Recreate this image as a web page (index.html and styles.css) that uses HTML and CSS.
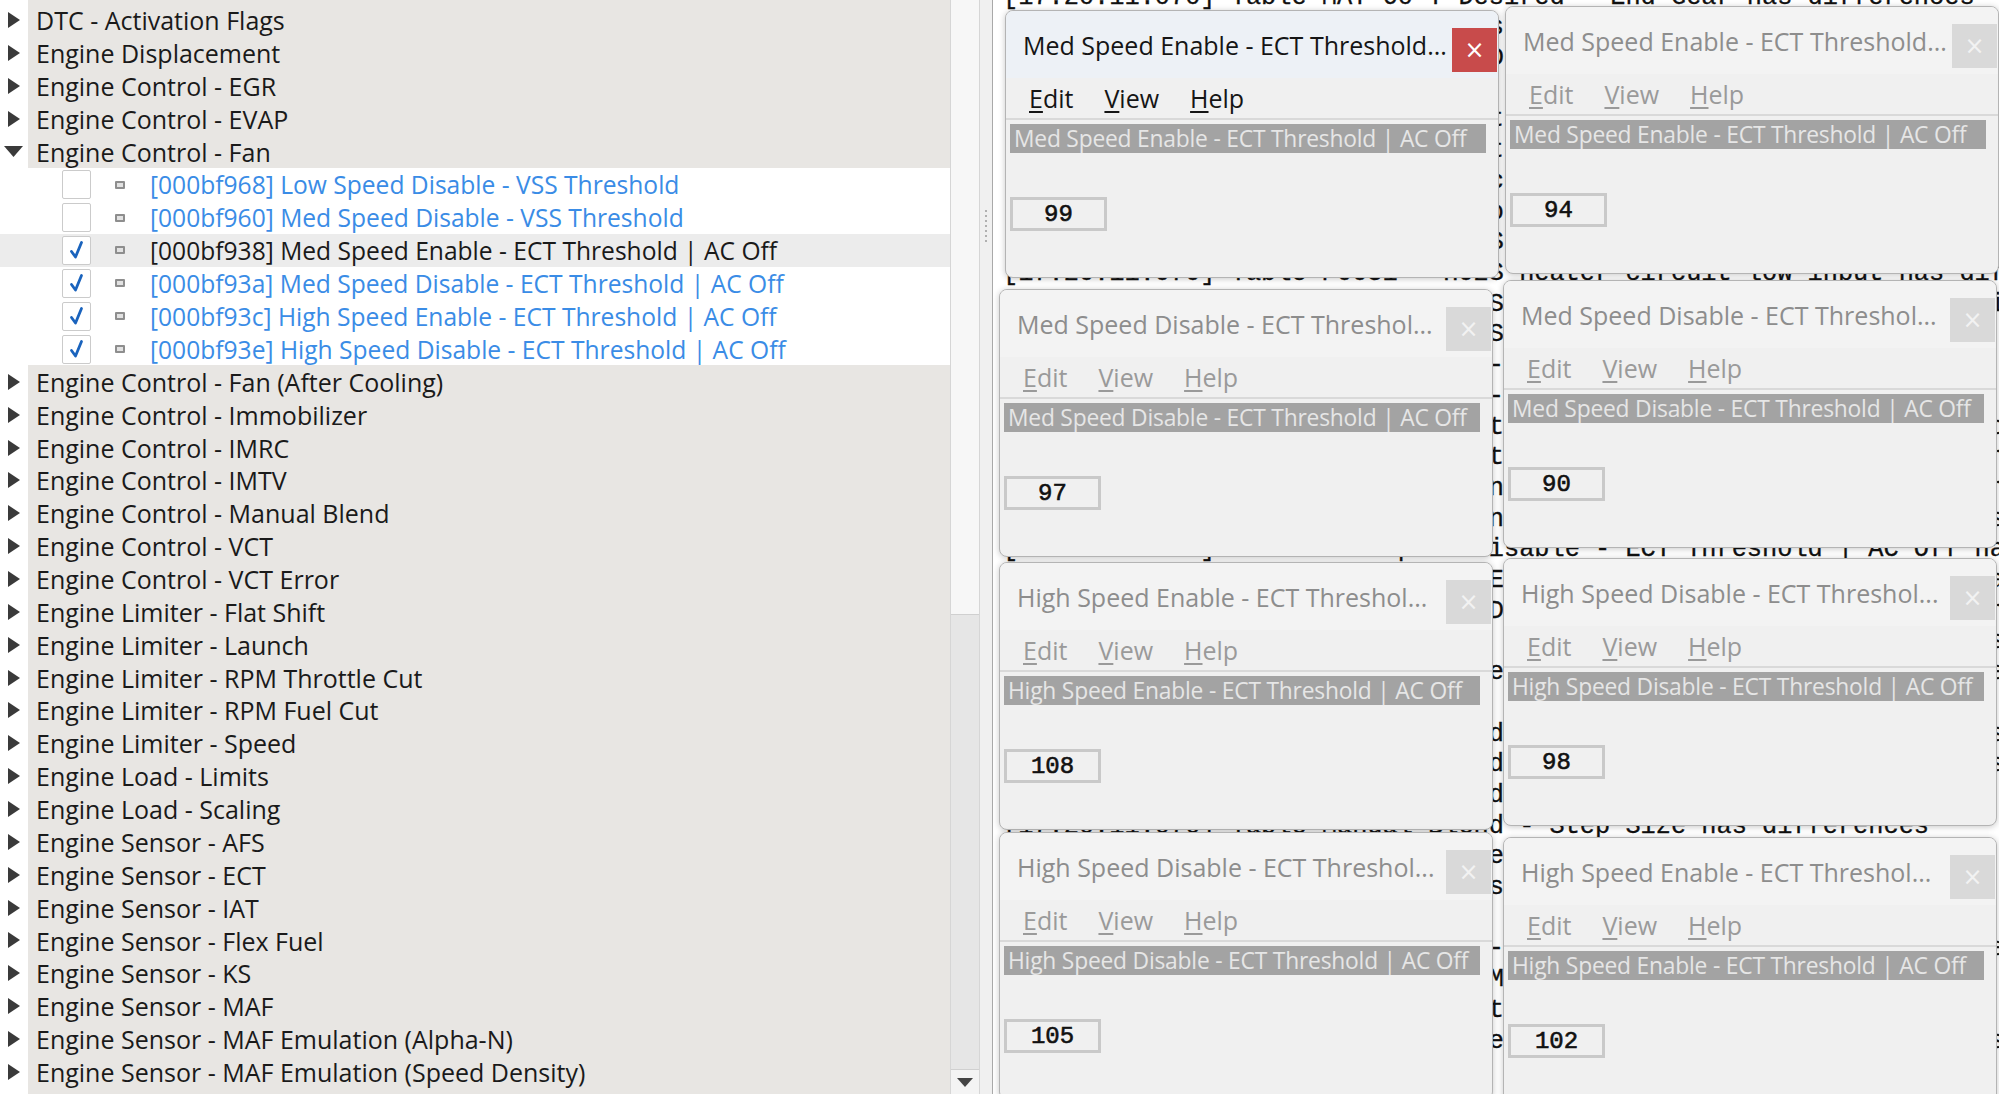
FILE: index.html
```html
<!DOCTYPE html>
<html>
<head>
<meta charset="utf-8">
<link rel="stylesheet" href="styles.css">
</head>
<body>
<div class="app">
  <div class="tree">
    <div class="row top"><span class="exp"><svg width="14" height="16" viewBox="0 0 14 16"><path d="M1 0 L13 8 L1 16 Z"/></svg></span><span class="txt">DTC - Activation Flags</span></div>
    <div class="row top"><span class="exp"><svg width="14" height="16" viewBox="0 0 14 16"><path d="M1 0 L13 8 L1 16 Z"/></svg></span><span class="txt">Engine Displacement</span></div>
    <div class="row top"><span class="exp"><svg width="14" height="16" viewBox="0 0 14 16"><path d="M1 0 L13 8 L1 16 Z"/></svg></span><span class="txt">Engine Control - EGR</span></div>
    <div class="row top"><span class="exp"><svg width="14" height="16" viewBox="0 0 14 16"><path d="M1 0 L13 8 L1 16 Z"/></svg></span><span class="txt">Engine Control - EVAP</span></div>
    <div class="row top"><span class="exp open"><svg width="19" height="11" viewBox="0 0 19 11"><path d="M0 0 L19 0 L9.5 11 Z"/></svg></span><span class="txt">Engine Control - Fan</span></div>
    <div class="row child"><span class="cb"></span><span class="bullet"></span><span class="ctxt">[000bf968] Low Speed Disable - VSS Threshold</span></div>
    <div class="row child"><span class="cb"></span><span class="bullet"></span><span class="ctxt">[000bf960] Med Speed Disable - VSS Threshold</span></div>
    <div class="row child sel"><span class="cb"><svg width="26" height="26" viewBox="0 0 26 26"><path d="M7.5 14.5 L11.5 20 L17.5 5.5"/></svg></span><span class="bullet"></span><span class="ctxt">[000bf938] Med Speed Enable - ECT Threshold | AC Off</span></div>
    <div class="row child"><span class="cb"><svg width="26" height="26" viewBox="0 0 26 26"><path d="M7.5 14.5 L11.5 20 L17.5 5.5"/></svg></span><span class="bullet"></span><span class="ctxt">[000bf93a] Med Speed Disable - ECT Threshold | AC Off</span></div>
    <div class="row child"><span class="cb"><svg width="26" height="26" viewBox="0 0 26 26"><path d="M7.5 14.5 L11.5 20 L17.5 5.5"/></svg></span><span class="bullet"></span><span class="ctxt">[000bf93c] High Speed Enable - ECT Threshold | AC Off</span></div>
    <div class="row child"><span class="cb"><svg width="26" height="26" viewBox="0 0 26 26"><path d="M7.5 14.5 L11.5 20 L17.5 5.5"/></svg></span><span class="bullet"></span><span class="ctxt">[000bf93e] High Speed Disable - ECT Threshold | AC Off</span></div>
    <div class="row top"><span class="exp"><svg width="14" height="16" viewBox="0 0 14 16"><path d="M1 0 L13 8 L1 16 Z"/></svg></span><span class="txt">Engine Control - Fan (After Cooling)</span></div>
    <div class="row top"><span class="exp"><svg width="14" height="16" viewBox="0 0 14 16"><path d="M1 0 L13 8 L1 16 Z"/></svg></span><span class="txt">Engine Control - Immobilizer</span></div>
    <div class="row top"><span class="exp"><svg width="14" height="16" viewBox="0 0 14 16"><path d="M1 0 L13 8 L1 16 Z"/></svg></span><span class="txt">Engine Control - IMRC</span></div>
    <div class="row top"><span class="exp"><svg width="14" height="16" viewBox="0 0 14 16"><path d="M1 0 L13 8 L1 16 Z"/></svg></span><span class="txt">Engine Control - IMTV</span></div>
    <div class="row top"><span class="exp"><svg width="14" height="16" viewBox="0 0 14 16"><path d="M1 0 L13 8 L1 16 Z"/></svg></span><span class="txt">Engine Control - Manual Blend</span></div>
    <div class="row top"><span class="exp"><svg width="14" height="16" viewBox="0 0 14 16"><path d="M1 0 L13 8 L1 16 Z"/></svg></span><span class="txt">Engine Control - VCT</span></div>
    <div class="row top"><span class="exp"><svg width="14" height="16" viewBox="0 0 14 16"><path d="M1 0 L13 8 L1 16 Z"/></svg></span><span class="txt">Engine Control - VCT Error</span></div>
    <div class="row top"><span class="exp"><svg width="14" height="16" viewBox="0 0 14 16"><path d="M1 0 L13 8 L1 16 Z"/></svg></span><span class="txt">Engine Limiter - Flat Shift</span></div>
    <div class="row top"><span class="exp"><svg width="14" height="16" viewBox="0 0 14 16"><path d="M1 0 L13 8 L1 16 Z"/></svg></span><span class="txt">Engine Limiter - Launch</span></div>
    <div class="row top"><span class="exp"><svg width="14" height="16" viewBox="0 0 14 16"><path d="M1 0 L13 8 L1 16 Z"/></svg></span><span class="txt">Engine Limiter - RPM Throttle Cut</span></div>
    <div class="row top"><span class="exp"><svg width="14" height="16" viewBox="0 0 14 16"><path d="M1 0 L13 8 L1 16 Z"/></svg></span><span class="txt">Engine Limiter - RPM Fuel Cut</span></div>
    <div class="row top"><span class="exp"><svg width="14" height="16" viewBox="0 0 14 16"><path d="M1 0 L13 8 L1 16 Z"/></svg></span><span class="txt">Engine Limiter - Speed</span></div>
    <div class="row top"><span class="exp"><svg width="14" height="16" viewBox="0 0 14 16"><path d="M1 0 L13 8 L1 16 Z"/></svg></span><span class="txt">Engine Load - Limits</span></div>
    <div class="row top"><span class="exp"><svg width="14" height="16" viewBox="0 0 14 16"><path d="M1 0 L13 8 L1 16 Z"/></svg></span><span class="txt">Engine Load - Scaling</span></div>
    <div class="row top"><span class="exp"><svg width="14" height="16" viewBox="0 0 14 16"><path d="M1 0 L13 8 L1 16 Z"/></svg></span><span class="txt">Engine Sensor - AFS</span></div>
    <div class="row top"><span class="exp"><svg width="14" height="16" viewBox="0 0 14 16"><path d="M1 0 L13 8 L1 16 Z"/></svg></span><span class="txt">Engine Sensor - ECT</span></div>
    <div class="row top"><span class="exp"><svg width="14" height="16" viewBox="0 0 14 16"><path d="M1 0 L13 8 L1 16 Z"/></svg></span><span class="txt">Engine Sensor - IAT</span></div>
    <div class="row top"><span class="exp"><svg width="14" height="16" viewBox="0 0 14 16"><path d="M1 0 L13 8 L1 16 Z"/></svg></span><span class="txt">Engine Sensor - Flex Fuel</span></div>
    <div class="row top"><span class="exp"><svg width="14" height="16" viewBox="0 0 14 16"><path d="M1 0 L13 8 L1 16 Z"/></svg></span><span class="txt">Engine Sensor - KS</span></div>
    <div class="row top"><span class="exp"><svg width="14" height="16" viewBox="0 0 14 16"><path d="M1 0 L13 8 L1 16 Z"/></svg></span><span class="txt">Engine Sensor - MAF</span></div>
    <div class="row top"><span class="exp"><svg width="14" height="16" viewBox="0 0 14 16"><path d="M1 0 L13 8 L1 16 Z"/></svg></span><span class="txt">Engine Sensor - MAF Emulation (Alpha-N)</span></div>
    <div class="row top"><span class="exp"><svg width="14" height="16" viewBox="0 0 14 16"><path d="M1 0 L13 8 L1 16 Z"/></svg></span><span class="txt">Engine Sensor - MAF Emulation (Speed Density)</span></div>
  </div>
  <div class="vscroll">
    <div class="thumb"></div>
    <div class="track"></div>
    <div class="down"><svg width="16" height="9" viewBox="0 0 16 9"><path d="M0 0 L16 0 L8 9 Z"/></svg></div>
  </div>
  <div class="splitter"><div class="grip"></div></div>
  <div class="logpane">
<pre class="log">[17:20:11.070] Table MAT 60 T Desired - End Gear has differences
[17:20:11.070] Table MAT 60 T Desired - Start Gear has differences
[17:20:11.070] Table Cold Start Delay - Engine Run Time has differences
[17:20:11.070] Table Boost Limit - Gear Scaler Offset has differences
[17:20:11.070] Table Boost Target - Desired Load has differences
[17:20:11.070] Table Boost Target - Wastegate Base has differences
[17:20:11.070] Table Spark Advance - Knock Retard has differences
[17:20:11.070] Table Injector Slope - Flow Rate has differences
[17:20:11.070] Table P0030 - HO2S Heater control circuit has differences
[17:20:11.070] Table P0031 - HO2S heater circuit low input has differences
[17:20:11.070] Table P0032 - HO2S heater circuit high input has differences
[17:20:11.070] Table P0036 - HO2S Bank 1 Sensor 2 has differences
[17:20:11.070] Table Idle Speed - Base RPM Target has differences
[17:20:11.070] Table Idle Speed - Neutral Offset has differences
[17:20:11.070] Table Throttle Cut - Enable Threshold has differences
[17:20:11.070] Table Throttle Cut - Hold Time Seconds has differences
[17:20:11.070] Table Low Speed Enable - ECT Threshold has differences
[17:20:11.070] Table Med Speed Enable - ECT Threshold | AC Off has differences
[17:20:11.070] Table Med Speed Disable - ECT Threshold | AC Off has differences
[17:20:11.070] Table High Speed Enable - ECT Threshold | AC Off has differences
[17:20:11.070] Table High Speed Disable - ECT Threshold | AC Off has differences
[17:20:11.070] Table Immobilizer - Key Count Limit has differences
[17:20:11.070] Table IMRC - Runner Position Desired has differences
[17:20:11.070] Table IMTV - Open Threshold RPM has differences
[17:20:11.070] Table Manual Blend - Load Threshold has differences
[17:20:11.070] Table Manual Blend - Gear Threshold has differences
[17:20:11.070] Table Manual Blend - Time Constant has differences
[17:20:11.070] Table Manual Blend - Step Size has differences
[17:20:11.070] Table VCT - Intake Cam Desired has differences
[17:20:11.070] Table VCT - Exhaust Cam Desired has differences
[17:20:11.070] Table VCT Error - Intake Limit Max has differences
[17:20:11.070] Table Flat Shift - Cut Time Duration has differences
[17:20:11.070] Table Launch - RPM Target Desired has differences
[17:20:11.070] Table RPM Fuel Cut - Limit Maximum has differences
[17:20:11.070] Table Speed Limiter - Maximum Speed has differences
[17:20:11.070] Table Load Limits - Maximum Load has differences
[17:20:11.070] Table Load Scaling - Multiplier has differences</pre>

    <div class="win w-a active">
      <div class="titlebar"><span class="title">Med Speed Enable - ECT Threshold...</span><span class="close">×</span></div>
      <div class="menubar"><span class="menu"><u>E</u>dit</span><span class="menu"><u>V</u>iew</span><span class="menu"><u>H</u>elp</span></div>
      <div class="label">Med Speed Enable - ECT Threshold | AC Off</div>
      <div class="value">99</div>
    </div>
    <div class="win w-b">
      <div class="titlebar"><span class="title">Med Speed Enable - ECT Threshold...</span><span class="close">×</span></div>
      <div class="menubar"><span class="menu"><u>E</u>dit</span><span class="menu"><u>V</u>iew</span><span class="menu"><u>H</u>elp</span></div>
      <div class="label">Med Speed Enable - ECT Threshold | AC Off</div>
      <div class="value">94</div>
    </div>
    <div class="win w-c">
      <div class="titlebar"><span class="title">Med Speed Disable - ECT Threshol...</span><span class="close">×</span></div>
      <div class="menubar"><span class="menu"><u>E</u>dit</span><span class="menu"><u>V</u>iew</span><span class="menu"><u>H</u>elp</span></div>
      <div class="label">Med Speed Disable - ECT Threshold | AC Off</div>
      <div class="value">97</div>
    </div>
    <div class="win w-d">
      <div class="titlebar"><span class="title">Med Speed Disable - ECT Threshol...</span><span class="close">×</span></div>
      <div class="menubar"><span class="menu"><u>E</u>dit</span><span class="menu"><u>V</u>iew</span><span class="menu"><u>H</u>elp</span></div>
      <div class="label">Med Speed Disable - ECT Threshold | AC Off</div>
      <div class="value">90</div>
    </div>
    <div class="win w-e">
      <div class="titlebar"><span class="title">High Speed Enable - ECT Threshol...</span><span class="close">×</span></div>
      <div class="menubar"><span class="menu"><u>E</u>dit</span><span class="menu"><u>V</u>iew</span><span class="menu"><u>H</u>elp</span></div>
      <div class="label">High Speed Enable - ECT Threshold | AC Off</div>
      <div class="value">108</div>
    </div>
    <div class="win w-f">
      <div class="titlebar"><span class="title">High Speed Disable - ECT Threshol...</span><span class="close">×</span></div>
      <div class="menubar"><span class="menu"><u>E</u>dit</span><span class="menu"><u>V</u>iew</span><span class="menu"><u>H</u>elp</span></div>
      <div class="label">High Speed Disable - ECT Threshold | AC Off</div>
      <div class="value">98</div>
    </div>
    <div class="win w-g">
      <div class="titlebar"><span class="title">High Speed Disable - ECT Threshol...</span><span class="close">×</span></div>
      <div class="menubar"><span class="menu"><u>E</u>dit</span><span class="menu"><u>V</u>iew</span><span class="menu"><u>H</u>elp</span></div>
      <div class="label">High Speed Disable - ECT Threshold | AC Off</div>
      <div class="value">105</div>
    </div>
    <div class="win w-h">
      <div class="titlebar"><span class="title">High Speed Enable - ECT Threshol...</span><span class="close">×</span></div>
      <div class="menubar"><span class="menu"><u>E</u>dit</span><span class="menu"><u>V</u>iew</span><span class="menu"><u>H</u>elp</span></div>
      <div class="label">High Speed Enable - ECT Threshold | AC Off</div>
      <div class="value">102</div>
    </div>
  </div>
</div>
</body>
</html>
```
FILE: styles.css
```css
html, body {
  margin: 0;
  padding: 0;
}
body {
  width: 1999px;
  height: 1094px;
  overflow: hidden;
  background: #ffffff;
  font-family: "Open Sans", "Noto Sans", sans-serif;
}
.app {
  display: flex;
  width: 1999px;
  height: 1094px;
}

/* ---------- tree ---------- */
.tree {
  width: 950px;
  flex: none;
  box-sizing: border-box;
  padding-top: 4px;
  background: linear-gradient(to right, #ffffff 28px, #e8e6e3 28px);
  overflow: hidden;
}
.row {
  height: 32.86px;
  display: flex;
  align-items: center;
  font-size: 25px;
  white-space: nowrap;
}
.row.top {
  color: #1a1a1a;
}
.exp {
  width: 28px;
  flex: none;
  display: flex;
  align-items: center;
  padding-left: 7px;
  box-sizing: border-box;
}
.exp.open {
  padding-left: 4px;
}
.exp svg path {
  fill: #3a3a3a;
}
.txt {
  padding-left: 8px;
}
.row.child {
  background: #ffffff;
  color: #3a8ce6;
}
.row.child.sel {
  background: #ececec;
  color: #1a1a1a;
}
.cb {
  width: 29px;
  height: 29px;
  box-sizing: border-box;
  border: 1.5px solid #cbcbcb;
  border-radius: 2px;
  background: #ffffff;
  margin-left: 62px;
  display: flex;
  align-items: center;
  justify-content: center;
}
.cb svg path {
  fill: none;
  stroke: #1a63bd;
  stroke-width: 2.8;
  stroke-linecap: round;
  stroke-linejoin: round;
}
.bullet {
  width: 10px;
  height: 8px;
  box-sizing: border-box;
  border: 2px solid #8e8e8e;
  border-radius: 1px;
  background: #e2e2e2;
  margin-left: 24px;
}
.ctxt {
  margin-left: 25px;
  font-size: 24.6px;
}

/* ---------- scrollbar ---------- */
.vscroll {
  width: 30px;
  flex: none;
  box-sizing: border-box;
  border-left: 1px solid #d6d6d6;
  border-right: 1px solid #d6d6d6;
  display: flex;
  flex-direction: column;
  background: #e6e6e6;
}
.thumb {
  height: 614px;
  background: #f7f7f7;
  border-bottom: 1px solid #d0d0d0;
}
.track {
  flex: 1;
}
.down {
  height: 24px;
  background: #f4f4f4;
  border-top: 1px solid #d0d0d0;
  display: flex;
  align-items: center;
  justify-content: center;
}
.down svg path {
  fill: #444444;
}

/* ---------- splitter ---------- */
.splitter {
  width: 12px;
  flex: none;
  background: #f0f0f0;
  border-right: 1px solid #a9a9a9;
  position: relative;
}
.grip {
  margin: 210px 0 0 5px;
  width: 2px;
  height: 32px;
  background: repeating-linear-gradient(to bottom, #b0b0b0 0 2px, transparent 2px 5px);
}

/* ---------- log + windows ---------- */
.logpane {
  flex: 1;
  position: relative;
  overflow: hidden;
  background: #ffffff;
}
.log {
  margin: -17.35px 0 0 0;
  padding-left: 10px;
  font-family: "Liberation Mono", "Courier New", monospace;
  font-size: 25.3px;
  line-height: 30.7px;
  color: #111111;
  white-space: pre;
  -webkit-text-stroke: 0.3px #111111;
}

.win {
  position: absolute;
  width: 494px;
  height: 268px;
  box-sizing: border-box;
  border: 1px solid #b4b4b4;
  border-radius: 8px;
  background: #f0f0f0;
  box-shadow: 0 1px 6px rgba(0, 0, 0, 0.22);
  overflow: hidden;
  display: flex;
  flex-direction: column;
}
.w-a { left: 12px;  top: 10px; }
.w-b { left: 512px; top: 6px; }
.w-c { left: 6px;   top: 289px; }
.w-d { left: 510px; top: 280px; }
.w-e { left: 6px;   top: 562px; }
.w-f { left: 510px; top: 558px; }
.w-g { left: 6px;   top: 832px; }
.w-h { left: 510px; top: 837px; }

.titlebar {
  height: 67px;
  flex: none;
  display: flex;
  align-items: center;
  padding-left: 17px;
  background: #f3f3f3;
  position: relative;
}
.active .titlebar {
  background: #edf1f6;
}
.title {
  font-size: 25px;
  color: #8d8d8d;
  white-space: nowrap;
}
.active .title {
  color: #151515;
}
.close {
  margin-left: auto;
  align-self: flex-start;
  margin-top: 17px;
  margin-right: 1px;
  width: 45px;
  height: 44px;
  display: flex;
  align-items: center;
  justify-content: center;
  background: #d9d9d9;
  color: #f2f2f2;
  font-size: 24px;
  font-family: "DejaVu Sans", sans-serif;
}
.active .close {
  background: #c84b4b;
  color: #ffffff;
}
.menubar {
  height: 40px;
  flex: none;
  display: flex;
  align-items: center;
  padding-left: 7px;
  border-bottom: 2px solid #d9d9d9;
}
.menu {
  font-size: 25px;
  padding: 0 15px 0 16px;
  color: #9a9a9a;
}
.active .menu {
  color: #151515;
}
.menu u {
  text-decoration-thickness: 2px;
  text-underline-offset: 3px;
}
.label {
  margin: 4px 12px 0 4px;
  height: 29px;
  flex: none;
  background: #a3a3a3;
  color: #e6e6e6;
  font-size: 22.8px;
  line-height: 29px;
  padding-left: 4px;
  white-space: nowrap;
  overflow: hidden;
  letter-spacing: -0.2px;
}
.value {
  margin: 44px 0 0 4px;
  width: 97px;
  height: 34px;
  flex: none;
  box-sizing: border-box;
  border: 3px solid #c9c9c9;
  background: #f0f0f0;
  display: flex;
  align-items: center;
  justify-content: center;
  font-family: "Liberation Mono", "Courier New", monospace;
  font-size: 24px;
  color: #111111;
  -webkit-text-stroke: 0.6px #111111;
}
```
